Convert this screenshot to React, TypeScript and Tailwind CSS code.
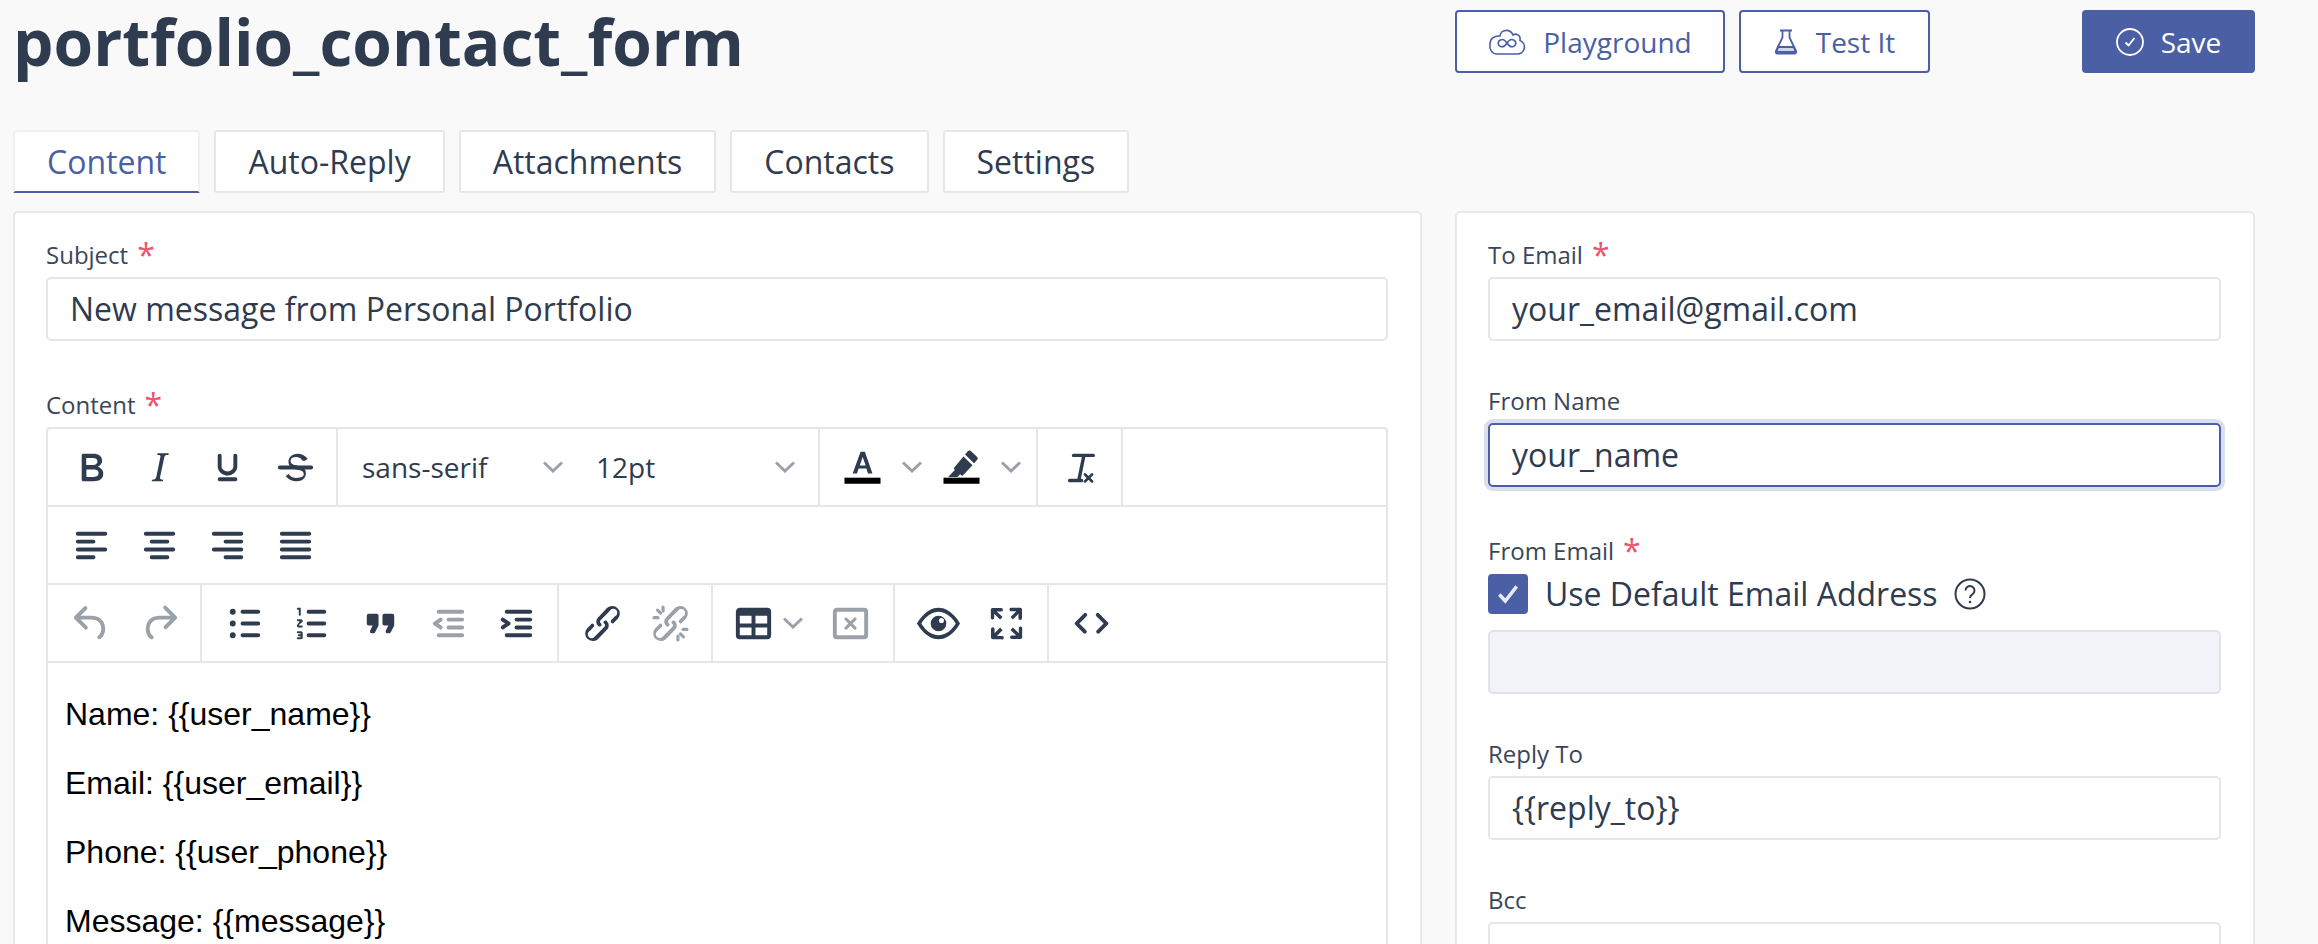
import type { ReactNode } from "react";

const icons = {
  bold: "M7.8 19c-.3 0-.5 0-.6-.2l-.2-.5V5.7c0-.2 0-.4.2-.5l.6-.2h5c1.5 0 2.7.3 3.5 1 .7.6 1.1 1.4 1.1 2.5a3 3 0 0 1-.6 1.9c-.4.6-1 1-1.6 1.2.4.1.9.3 1.3.6s.8.7 1 1.2c.4.4.5 1 .5 1.6 0 1.3-.4 2.3-1.3 3-.8.7-2.1 1-3.8 1H7.8zm5-8.3c.6 0 1.2-.1 1.6-.5.4-.3.6-.7.6-1.3 0-1.1-.8-1.7-2.3-1.7H9.3v3.5h3.4zm.5 6c.7 0 1.3-.1 1.7-.4.4-.4.6-.9.6-1.5s-.2-1-.7-1.4c-.4-.3-1-.4-2-.4H9.4v3.8h4z",
  italic: "M16.7 4.7l-.1.9h-.3c-.6 0-1 0-1.4.3-.3.3-.4.6-.5 1.1l-2.1 9.8v.6c0 .5.4.8 1.4.8h.2l-.2.8H8l.2-.8h.2c1.1 0 1.8-.5 2-1.5l2-9.8.1-.5c0-.6-.4-.8-1.4-.8h-.3l.2-.9h5.8z",
  underline: "M16 5c.6 0 1 .4 1 1v5.5a4 4 0 0 1-.4 1.8l-1 1.4a5.3 5.3 0 0 1-5.5 1 5 5 0 0 1-1.6-1c-.5-.4-.8-.9-1.1-1.4a4 4 0 0 1-.4-1.8V6c0-.6.4-1 1-1s1 .4 1 1v5.5c0 .3 0 .6.2 1l.6.7a3.3 3.3 0 0 0 2.2.8 3.4 3.4 0 0 0 2.2-.8c.3-.2.4-.5.6-.8l.2-.9V6c0-.6.4-1 1-1zM8 17h8c.6 0 1 .4 1 1s-.4 1-1 1H8a1 1 0 0 1 0-2z",
  strike: "M15.6 8.5c-.5-.7-1-1.100-1.300-1.300-.6-.4-1.300-.6-2-.6-2.700 0-2.800 1.700-2.800 2.100 0 1.600 1.800 2 3.200 2.300 4.400.900 4.600 2.800 4.600 3.900 0 1.400-.7 4.100-5 4.100A6.200 6.200 0 0 1 7 16.400l1.500-1.100c.4.600 1.600 2 3.700 2 1.600 0 2.500-.4 3-.5.600-.2 1-.6 1-1.400 0-1-.5-1.700-3-2.200-1.400-.3-4.800-1-4.800-4.200 0-1.900 1.600-4 4.800-4 1.800 0 3.200.8 4 1.500.500.5.8.900 1 1.200l-1.400.8z",
  alignLeft: "M5 5h14c.6 0 1 .4 1 1s-.4 1-1 1H5a1 1 0 1 1 0-2zm0 4h8c.6 0 1 .4 1 1s-.4 1-1 1H5a1 1 0 1 1 0-2zm0 8h8c.6 0 1 .4 1 1s-.4 1-1 1H5a1 1 0 0 1 0-2zm0-4h14c.6 0 1 .4 1 1s-.4 1-1 1H5a1 1 0 0 1 0-2z",
  alignCenter: "M5 5h14c.6 0 1 .4 1 1s-.4 1-1 1H5a1 1 0 1 1 0-2zm3 4h8c.6 0 1 .4 1 1s-.4 1-1 1H8a1 1 0 1 1 0-2zm0 8h8c.6 0 1 .4 1 1s-.4 1-1 1H8a1 1 0 0 1 0-2zm-3-4h14c.6 0 1 .4 1 1s-.4 1-1 1H5a1 1 0 0 1 0-2z",
  alignRight: "M5 5h14c.6 0 1 .4 1 1s-.4 1-1 1H5a1 1 0 1 1 0-2zm6 4h8c.6 0 1 .4 1 1s-.4 1-1 1h-8a1 1 0 0 1 0-2zm0 8h8c.6 0 1 .4 1 1s-.4 1-1 1h-8a1 1 0 0 1 0-2zm-6-4h14c.6 0 1 .4 1 1s-.4 1-1 1H5a1 1 0 0 1 0-2z",
  justify: "M5 5h14c.6 0 1 .4 1 1s-.4 1-1 1H5a1 1 0 1 1 0-2zm0 4h14c.6 0 1 .4 1 1s-.4 1-1 1H5a1 1 0 1 1 0-2zm0 4h14c.6 0 1 .4 1 1s-.4 1-1 1H5a1 1 0 0 1 0-2zm0 4h14c.6 0 1 .4 1 1s-.4 1-1 1H5a1 1 0 0 1 0-2z",
  undo: "M6.4 8H12c3.7 0 6.2 2 6.8 5.1.6 2.7-.4 5.6-2.3 6.8a1 1 0 0 1-1-1.8c1.1-.6 1.8-2.7 1.4-4.6-.5-2.1-2.1-3.5-4.9-3.5H6.4l3.3 3.3a1 1 0 1 1-1.4 1.4l-5-5a1 1 0 0 1 0-1.4l5-5a1 1 0 0 1 1.4 1.4L6.4 8z",
  redo: "M17.6 10H12c-2.8 0-4.4 1.4-4.9 3.5-.4 2 .3 4 1.4 4.6a1 1 0 1 1-1 1.8c-2-1.2-2.9-4.1-2.3-6.8.6-3 3-5.1 6.8-5.1h5.6l-3.3-3.3a1 1 0 1 1 1.4-1.4l5 5a1 1 0 0 1 0 1.4l-5 5a1 1 0 0 1-1.4-1.4l3.3-3.3z",
  bullets: "M11 5h8c.6 0 1 .4 1 1s-.4 1-1 1h-8a1 1 0 0 1 0-2zm0 6h8c.6 0 1 .4 1 1s-.4 1-1 1h-8a1 1 0 0 1 0-2zm0 6h8c.6 0 1 .4 1 1s-.4 1-1 1h-8a1 1 0 0 1 0-2zM4.500 6a1.500 1.500 0 1 1 3 0 1.500 1.500 0 0 1-3 0zm0 6a1.500 1.500 0 1 1 3 0 1.500 1.500 0 0 1-3 0zm0 6a1.500 1.500 0 1 1 3 0 1.500 1.500 0 0 1-3 0z",
  numbers: "M10 17h8c.6 0 1 .4 1 1s-.4 1-1 1h-8a1 1 0 0 1 0-2zm0-6h8c.6 0 1 .4 1 1s-.4 1-1 1h-8a1 1 0 0 1 0-2zm0-6h8c.6 0 1 .4 1 1s-.4 1-1 1h-8a1 1 0 1 1 0-2zM6 4v3.500c0 .3-.2.5-.5.5a.5.5 0 0 1-.5-.5V5h-.5a.5.5 0 0 1 0-1H6zm-1 8.800l.2.2h1.300c.3 0 .5.2.5.5s-.2.5-.5.5H4.900a.9.9 0 0 1-.9-.9c0-.2 0-.4.2-.5l1.300-1.800h-1c-.3 0-.5-.2-.5-.5s.2-.5.5-.5h1.600c.5 0 .9.4.9.9 0 .2 0 .4-.2.5L5 12.800zm2 4.300v2c0 .5-.4.9-.9.9H4.500a.5.5 0 0 1 0-1h1.400v-.5h-.9a.5.5 0 0 1 0-1h.9V17H4.500a.5.5 0 0 1 0-1h1.600c.5 0 .9.4.9.9v.2z",
  quote: "M7.500 17h.9c.4 0 .7-.2.9-.6L11 13V8c0-.6-.4-1-1-1H6a1 1 0 0 0-1 1v4c0 .6.4 1 1 1h2l-1.300 2.700a1 1 0 0 0 .8 1.300zm8 0h.9c.4 0 .7-.2.9-.6L19 13V8c0-.6-.4-1-1-1h-4a1 1 0 0 0-1 1v4c0 .6.4 1 1 1h2l-1.300 2.700a1 1 0 0 0 .8 1.300z",
  outdent: "M7 5h12c.6 0 1 .4 1 1s-.4 1-1 1H7a1 1 0 1 1 0-2zm5 4h7c.6 0 1 .4 1 1s-.4 1-1 1h-7a1 1 0 0 1 0-2zm0 4h7c.6 0 1 .4 1 1s-.4 1-1 1h-7a1 1 0 0 1 0-2zm-5 4h12a1 1 0 0 1 0 2H7a1 1 0 0 1 0-2zm1.600-3.800a1 1 0 0 1-1.200 1.600l-3-2a1 1 0 0 1 0-1.600l3-2a1 1 0 0 1 1.200 1.600L6.800 12l1.800 1.200z",
  indent: "M7 5h12c.6 0 1 .4 1 1s-.4 1-1 1H7a1 1 0 1 1 0-2zm5 4h7c.6 0 1 .4 1 1s-.4 1-1 1h-7a1 1 0 0 1 0-2zm0 4h7c.6 0 1 .4 1 1s-.4 1-1 1h-7a1 1 0 0 1 0-2zm-5 4h12a1 1 0 0 1 0 2H7a1 1 0 0 1 0-2zm-2.600-3.800L6.200 12l-1.800-1.200a1 1 0 0 1 1.200-1.600l3 2a1 1 0 0 1 0 1.600l-3 2a1 1 0 1 1-1.200-1.600z",
  link: "M6.200 12.300a1 1 0 0 1 1.400 1.400l-2 2a2 2 0 1 0 2.600 2.800l4.800-4.800a1 1 0 0 0 0-1.400 1 1 0 1 1 1.400-1.300 2.900 2.900 0 0 1 0 4L9.600 20a3.900 3.900 0 0 1-5.500-5.500l2-2zm11.600-.6a1 1 0 0 1-1.400-1.400l2-2a2 2 0 1 0-2.600-2.800L11 10.300a1 1 0 0 0 0 1.400A1 1 0 1 1 9.600 13a2.900 2.900 0 0 1 0-4L14.400 4a3.900 3.900 0 0 1 5.500 5.500l-2 2z",
  unlink: "M6.200 12.300a1 1 0 0 1 1.400 1.400l-2.100 2a2 2 0 1 0 2.700 2.800l4.800-4.800a1 1 0 0 0 0-1.400 1 1 0 1 1 1.400-1.300 2.900 2.900 0 0 1 0 4L9.600 20a3.900 3.900 0 0 1-5.500-5.500l2-2zm11.600-.6a1 1 0 0 1-1.400-1.400l2.100-2a2 2 0 1 0-2.700-2.800L11 10.300a1 1 0 0 0 0 1.400A1 1 0 1 1 9.600 13a2.900 2.900 0 0 1 0-4L14.400 4a3.900 3.900 0 0 1 5.500 5.500l-2 2zM7.600 6.300a.8.8 0 0 1-1.100 1.100L4.700 5.600a.8.8 0 0 1 1.100-1.100l1.800 1.800zM9 3.600v2a.8.8 0 0 1-1.600 0v-2a.8.8 0 0 1 1.600 0zM5.600 8.200a.8.8 0 0 1 0 1.600h-2a.8.8 0 0 1 0-1.600h2zM16.400 17.700a.8.8 0 0 1 1.100-1.100l1.800 1.800a.8.8 0 0 1-1.100 1.100l-1.800-1.800zM15 20.400v-2a.8.8 0 0 1 1.600 0v2a.8.8 0 0 1-1.600 0zM18.400 15.800a.8.8 0 0 1 0-1.600h2a.8.8 0 0 1 0 1.600h-2z",
  table: "M19 4a2 2 0 0 1 2 2v12a2 2 0 0 1-2 2H5a2 2 0 0 1-2-2V6c0-1.100.9-2 2-2h14zM5 14v4h6v-4H5zm14 0h-6v4h6v-4zm0-6h-6v4h6V8zM5 12h6V8H5v4z",
  tableDelete: "M19 4a2 2 0 0 1 2 2v12a2 2 0 0 1-2 2H5a2 2 0 0 1-2-2V6c0-1.100.9-2 2-2h14zM5 6v12h14V6H5zm8.100 6l1.900 1.900a.8.8 0 0 1-1.100 1.100L12 13.100 10.100 15A.8.8 0 0 1 9 13.900l1.900-1.900L9 10.100A.8.8 0 0 1 10.100 9l1.900 1.900L13.900 9a.8.8 0 0 1 1.100 1.100L13.100 12z",
  eye: "M12 4c3.100 0 5.900 1.800 8.100 4.100A18 18 0 0 1 23 12a18 18 0 0 1-2.900 3.900C17.900 18.200 15.100 20 12 20s-5.900-1.800-8.100-4.100A18 18 0 0 1 1 12a18 18 0 0 1 2.900-3.900C6.100 5.800 8.900 4 12 4zm0 2c-2.500 0-4.700 1.200-6.700 3.200A16.200 16.200 0 0 0 3.200 12c.5.8 1.300 1.800 2.100 2.800 2 2 4.200 3.200 6.700 3.200s4.700-1.200 6.700-3.200a16.200 16.200 0 0 0 2.100-2.800 16.200 16.200 0 0 0-2.100-2.800C16.700 7.200 14.500 6 12 6zm0 2a4 4 0 1 1-4 4 4 4 0 0 1 4-4zm1.500 1.200a1.300 1.300 0 1 0 1.300 1.300 1.300 1.300 0 0 0-1.300-1.300z",
  fullscreen: "M15.300 10l-1.200-1.300 2.900-3h-2.300a.9.9 0 1 1 0-1.700H19c.5 0 .9.4.9.9v4.400a.9.9 0 1 1-1.800 0V7l-2.800 3zm0 4l3 3v-2.300a.9.9 0 1 1 1.700 0V19c0 .5-.4.9-.9.9h-4.400a.9.9 0 1 1 0-1.800H17l-3-2.800 1.300-1.200zM10 15.400l-2.900 3h2.300a.9.9 0 1 1 0 1.700H5a.9.9 0 0 1-.9-.9v-4.400a.9.9 0 1 1 1.800 0V17l2.800-3 1.200 1.300zM8.700 10L5.700 7v2.300a.9.9 0 0 1-1.700 0V5c0-.5.4-.9.9-.9h4.400a.9.9 0 0 1 0 1.800H7l3 2.800L8.700 10z",
  code: "M9.400 8.400L5.800 12l3.600 3.600a1 1 0 0 1-1.400 1.400l-4.300-4.300a1 1 0 0 1 0-1.400L8 7a1 1 0 1 1 1.400 1.400zm5.200 0L18.200 12l-3.600 3.600a1 1 0 0 0 1.400 1.400l4.300-4.300a1 1 0 0 0 0-1.400L16 7a1 1 0 1 0-1.400 1.400z",
  textColor: "M11 4h2.200l3.900 11h-2.300l-.8-2.500H10L9.200 15H7L11 4zm1.100 2.600L10.600 11h3z",
  highlight: "M16.600 3.500l3.400 3.200c.4.4.4 1 0 1.400L18.400 9.800l-4.600-4.400 1.500-1.800c.4-.4.9-.4 1.300-.1zM13 6.400l4.600 4.400-5.200 5.600-1.100-1-1.400 1.500H5.200l3.400-3.600-.6-.9 5-6z",
  removeFormat: "M9 5h10c.5 0 .9.4.9.9s-.4.8-.9.8h-4l-2.300 11h.4c.5 0 .8.4.8.9s-.3.9-.8.9H7c-.5 0-.9-.4-.9-.9s.4-.9.9-.9h3.900l2.300-11H9c-.5 0-.9-.3-.9-.8S8.500 5 9 5zm7.600 11.300l1.300-1.300a.7.7 0 0 1 1 1l-1.300 1.300 1.300 1.300a.7.7 0 0 1-1 1l-1.300-1.300-1.300 1.300a.7.7 0 0 1-1-1l1.300-1.300-1.300-1.300a.7.7 0 0 1 1-1l1.300 1.300z",
};

type IconName = keyof typeof icons;

function Icon({ name, muted, bar }: { name: IconName; muted?: boolean; bar?: boolean }) {
  return (
    <svg viewBox="0 0 24 24" className={`h-[47px] w-[47px] shrink-0 ${muted ? "fill-[#9ba1a9]" : "fill-[#2f3b4f]"}`}>
      <path fillRule="evenodd" d={icons[name]} />
      {name === "strike" && <rect x="3" y="11" width="18" height="2" rx="1" />}
      {bar && <rect x="2.800" y="17.200" width="18.400" height="3.100" fill="#000" />}
    </svg>
  );
}

function Chevron() {
  return (
    <svg viewBox="0 0 20 12" className="h-[12px] w-[20px] shrink-0 fill-none stroke-[#9ba1a9] stroke-[3px]">
      <polyline points="1,1.500 10,10 19,1.500" />
    </svg>
  );
}

function ToolButton({ name, muted }: { name: IconName; muted?: boolean }) {
  return (
    <div className="flex h-full w-[68px] items-center justify-center">
      <Icon name={name} muted={muted} />
    </div>
  );
}

function Group({ className, children }: { className: string; children: ReactNode }) {
  return <div className={`flex h-full items-center border-r-2 border-[#e6e6e9] ${className}`}>{children}</div>;
}

function Label({ text, required }: { text: string; required?: boolean }) {
  return (
    <div className="flex h-[40px] items-start pt-[1px] text-[24px] leading-[34px] text-[#3a4658]">
      <span>{text}</span>
      {required && <span className="ml-[9px] h-[34px] text-[32px] leading-[34px] text-[#e8566f]">*</span>}
    </div>
  );
}

function Input({ value, focused }: { value?: string; focused?: boolean }) {
  return (
    <div
      className={`flex h-[64px] items-center rounded-[5px] border-2 pl-[22px] text-[32px] ${
        focused ? "border-[#4b5fa5] bg-white shadow-[0_0_0_4px_#dadfee]" : "border-[#e6e6e9] bg-white"
      }`}
    >
      {value}
    </div>
  );
}

function Tab({ label, active }: { label: string; active?: boolean }) {
  return (
    <div
      className={`flex h-[63px] items-center border-2 bg-white px-[32px] text-[32px] ${
        active ? "rounded-t-[4px] border-[#f0f0f2] border-b-[#4b5fa5] text-[#4b5fa5]" : "rounded-[3px] border-[#e6e6e9]"
      }`}
    >
      {label}
    </div>
  );
}

function CloudIcon() {
  return (
    <svg viewBox="0 0 38 28" className="h-[28px] w-[38px] fill-none stroke-[#4b5fa5] stroke-[1.600px]">
      <path d="M9 26h20a7 7 0 0 0 3-13.500C33 7 28 5 25 7 22 .500 13 1 12 8 6 7.500 2 11 2 16c-1 5 2 10 7 10z" />
      <path d="M19 15c-2-3-4.500-4-6.500-3a3.400 3.400 0 0 0 0 6.400c2 .8 4.500 0 6.500-3.400 2-3 4.500-4 6.500-3a3.400 3.400 0 0 1 0 6.400c-2 .8-4.500 0-6.500-3.400z" />
    </svg>
  );
}

function BeakerIcon() {
  return (
    <svg viewBox="0 0 24 26" className="h-[26px] w-[24px] fill-none stroke-[#4b5fa5] stroke-[1.800px]">
      <path d="M6 1.500h12M8.500 1.500v7L2 22c-.6 1.300.2 2.500 1.500 2.500h17c1.300 0 2.100-1.200 1.500-2.500L15.500 8.500v-7" />
      <path d="M4 18h16l1.500 5H2.500z" fill="#4b5fa5" fillOpacity="0.25" />
    </svg>
  );
}

function CheckCircleIcon() {
  return (
    <svg viewBox="0 0 28 28" className="h-[28px] w-[28px] fill-none stroke-white stroke-[1.800px]">
      <circle cx="14" cy="14" r="13" />
      <path d="M9.500 14.500l3 3 6-7.500" />
    </svg>
  );
}

function HelpIcon() {
  return (
    <svg viewBox="0 0 32 32" className="ml-[16px] h-[32px] w-[32px] fill-none stroke-[#2f3b4f] stroke-[2px]">
      <circle cx="16" cy="16" r="14.500" />
      <path d="M11.500 12.500a4.500 4.500 0 1 1 6.800 3.900c-1.500.9-2.300 1.700-2.300 3.600" />
      <circle cx="16" cy="24" r="1.300" fill="#2f3b4f" stroke="none" />
    </svg>
  );
}

export default function App() {
  return (
    <div className="h-[944px] w-[2318px] overflow-hidden bg-[#f9f9f9] pl-[13px] font-['Open_Sans',sans-serif] text-[#2f3b4f]">
      <div className="flex h-[130px] gap-[33px]">
        <div className="w-[1409px]">
          <h1 className="text-[64px] leading-[84px] font-bold">portfolio_contact_form</h1>
        </div>
        <div className="flex h-[63px] w-[800px] translate-y-[10px] justify-between text-[28px]">
          <div className="flex gap-[14px] text-[#4b5fa5]">
            <div className="flex w-[270px] items-center justify-center gap-[17px] rounded-[4px] border-2 border-[#4b5fa5] bg-white">
              <CloudIcon />
              Playground
            </div>
            <div className="flex w-[191px] items-center justify-center gap-[18px] rounded-[4px] border-2 border-[#4b5fa5] bg-white">
              <BeakerIcon />
              Test It
            </div>
          </div>
          <div className="flex w-[173px] items-center justify-center gap-[17px] rounded-[4px] bg-[#4b5fa5] text-white">
            <CheckCircleIcon />
            Save
          </div>
        </div>
      </div>

      <div className="flex gap-[14px]">
        <Tab label="Content" active />
        <Tab label="Auto-Reply" />
        <Tab label="Attachments" />
        <Tab label="Contacts" />
        <Tab label="Settings" />
      </div>

      <div className="mt-[18px] flex items-start gap-[33px]">
        <div className="h-[800px] w-[1409px] rounded-[5px] border-2 border-[#e8e8eb] bg-white pt-[24px] pr-[32px] pl-[31px]">
          <Label text="Subject" required />
          <Input value="New message from Personal Portfolio" />
          <div className="mt-[46px]">
            <Label text="Content" required />
          </div>
          <div className="rounded-[4px] border-2 border-[#e6e6e9]">
            <div className="flex h-[78px] border-b-2 border-[#e6e6e9]">
              <Group className="w-[290px] pl-[9px]">
                <ToolButton name="bold" />
                <ToolButton name="italic" />
                <ToolButton name="underline" />
                <ToolButton name="strike" />
              </Group>
              <Group className="w-[482px] text-[28px]">
                <div className="flex w-[240px] items-center justify-between pr-[15px] pl-[24px]">
                  sans-serif
                  <Chevron />
                </div>
                <div className="flex w-[240px] items-center justify-between pr-[23px] pl-[18px]">
                  12pt
                  <Chevron />
                </div>
              </Group>
              <Group className="w-[218px] gap-[16px] pl-[19px]">
                <Icon name="textColor" bar />
                <Chevron />
                <Icon name="highlight" bar />
                <Chevron />
              </Group>
              <Group className="w-[85px] justify-center">
                <Icon name="removeFormat" />
              </Group>
            </div>
            <div className="flex h-[78px] items-center border-b-2 border-[#e6e6e9] pl-[9px]">
              <ToolButton name="alignLeft" />
              <ToolButton name="alignCenter" />
              <ToolButton name="alignRight" />
              <ToolButton name="justify" />
            </div>
            <div className="flex h-[78px] border-b-2 border-[#e6e6e9]">
              <Group className="w-[154px] pl-[9px]">
                <ToolButton name="undo" muted />
                <ToolButton name="redo" muted />
              </Group>
              <Group className="w-[357px] pl-[8px]">
                <ToolButton name="bullets" />
                <ToolButton name="numbers" />
                <ToolButton name="quote" />
                <ToolButton name="outdent" muted />
                <ToolButton name="indent" />
              </Group>
              <Group className="w-[154px] pl-[9px]">
                <ToolButton name="link" />
                <ToolButton name="unlink" muted />
              </Group>
              <Group className="w-[182px] pl-[17px]">
                <Icon name="table" />
                <div className="mr-[24px] ml-[6px]">
                  <Chevron />
                </div>
                <Icon name="tableDelete" muted />
              </Group>
              <Group className="w-[154px] pl-[9px]">
                <ToolButton name="eye" />
                <ToolButton name="fullscreen" />
              </Group>
              <div className="flex h-full w-[85px] items-center justify-center">
                <Icon name="code" />
              </div>
            </div>
            <div className="px-[17px] pt-[17px] pb-[40px] font-['Liberation_Sans',sans-serif] text-[32px] leading-[69px] text-black">
              <p>{"Name: {{user_name}}"}</p>
              <p>{"Email: {{user_email}}"}</p>
              <p>{"Phone: {{user_phone}}"}</p>
              <p>{"Message: {{message}}"}</p>
            </div>
          </div>
        </div>

        <div className="h-[800px] w-[800px] rounded-[5px] border-2 border-[#e8e8eb] bg-white pt-[24px] pr-[32px] pl-[31px]">
          <Label text="To Email" required />
          <Input value="your_email@gmail.com" />
          <div className="mt-[42px]">
            <Label text="From Name" />
          </div>
          <Input value="your_name" focused />
          <div className="mt-[46px]">
            <Label text="From Email" required />
          </div>
          <div className="mt-[1px] flex h-[40px] items-center text-[32px]">
            <span className="mr-[17px] flex h-[40px] w-[40px] items-center justify-center rounded-[4px] bg-[#4b5fa5]">
              <svg viewBox="0 0 24 24" className="h-[26px] w-[26px] fill-none stroke-[#e8eaf4] stroke-[3.200px]">
                <path d="M4 12.500l5.500 6L20 5" />
              </svg>
            </span>
            Use Default Email Address
            <HelpIcon />
          </div>
          <div className="mt-[16px] h-[64px] rounded-[5px] border-2 border-[#e2e3e8] bg-[#f2f3f8]" />
          <div className="mt-[42px]">
            <Label text="Reply To" />
          </div>
          <Input value="{{reply_to}}" />
          <div className="mt-[42px]">
            <Label text="Bcc" />
          </div>
          <Input />
        </div>
      </div>
    </div>
  );
}
